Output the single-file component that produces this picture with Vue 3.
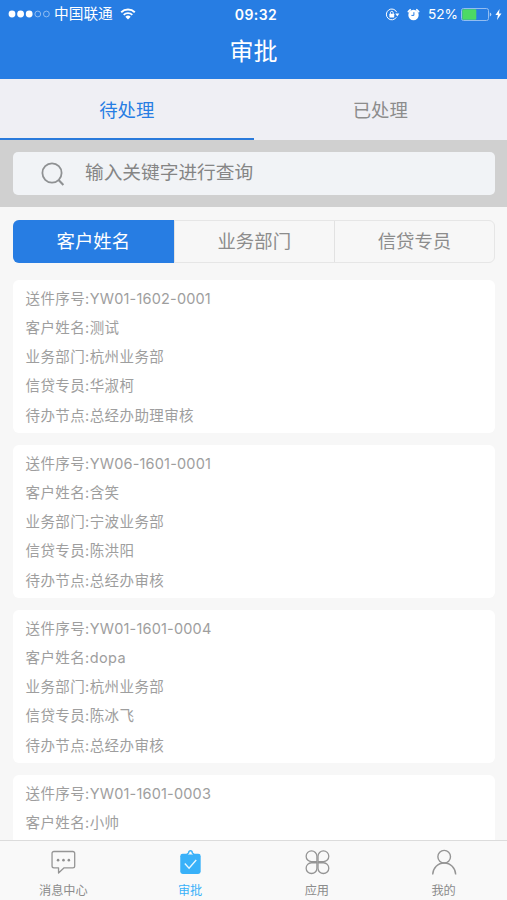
<script setup>
import { ref } from 'vue'

const tabs = ['待处理', '已处理']
const activeTab = ref(0)

const filters = ['客户姓名', '业务部门', '信贷专员']
const activeFilter = ref(0)

const keyword = ref('')

const list = ref([
    { no: 'YW01-1602-0001', name: '测试', dept: '杭州业务部', officer: '华淑柯', node: '总经办助理审核' },
    { no: 'YW06-1601-0001', name: '含笑', dept: '宁波业务部', officer: '陈洪阳', node: '总经办审核' },
    { no: 'YW01-1601-0004', name: 'dopa', dept: '杭州业务部', officer: '陈冰飞', node: '总经办审核' },
    { no: 'YW01-1601-0003', name: '小帅' }
])

const navs = [
    { key: 'message', label: '消息中心' },
    { key: 'approve', label: '审批' },
    { key: 'apps', label: '应用' },
    { key: 'mine', label: '我的' }
]
const activeNav = ref('approve')
</script>

<template>
    <div class="page">
        <!-- Header -->
        <header class="header">
            <div class="status-bar">
                <div class="status-left">
                    <svg class="signal" width="42" height="8" viewBox="0 0 42 8">
                        <circle cx="4" cy="4" r="3.4" fill="#fff" />
                        <circle cx="12.6" cy="4" r="3.4" fill="#fff" />
                        <circle cx="21.2" cy="4" r="3.4" fill="#fff" />
                        <circle cx="29.8" cy="4" r="2.9" fill="none" stroke="#a9cbf5" stroke-width=".8" />
                        <circle cx="38.4" cy="4" r="2.9" fill="none" stroke="#a9cbf5" stroke-width=".8" />
                    </svg>
                    <span class="carrier">中国联通</span>
                    <svg class="wifi" width="16" height="12" viewBox="0 0 16 12">
                        <path d="M1.2 4.3a9.8 9.8 0 0 1 13.6 0M3.7 6.9a6.2 6.2 0 0 1 8.6 0" fill="none" stroke="#fff" stroke-width="1.9" />
                        <path d="M8 11.6L5.3 8.8a3.9 3.9 0 0 1 5.4 0z" fill="#fff" />
                    </svg>
                </div>
                <span class="time">09:32</span>
                <div class="status-right">
                    <svg width="15" height="13" viewBox="0 0 15 13">
                        <path d="M11.7 4.2A5.4 5.4 0 1 0 11.4 9.2" fill="none" stroke="#fff" stroke-width="1" />
                        <path d="M10.3 5.4h4l-2 3z" fill="#fff" />
                        <rect x="4.4" y="5.8" width="4.8" height="3.6" rx=".4" fill="#fff" />
                        <path d="M5.4 6V4.8a1.4 1.4 0 0 1 2.8 0V6" fill="none" stroke="#fff" stroke-width=".9" />
                    </svg>
                    <svg class="alarm" width="13" height="13" viewBox="0 0 13 13">
                        <circle cx="6.5" cy="7" r="5.2" fill="#fff" />
                        <path d="M1.4 3.6L3.2 1.8M11.6 3.6L9.8 1.8" stroke="#fff" stroke-width="1.8" stroke-linecap="round" />
                        <path d="M6.9 4.2V7.4H4.4" fill="none" stroke="#277de3" stroke-width="1" />
                    </svg>
                    <span class="percent">52%</span>
                    <svg width="31" height="13" viewBox="0 0 31 13">
                        <rect x=".5" y=".5" width="27" height="12" rx="2" fill="none" stroke="#93bdf1" />
                        <rect x="1.3" y="1.3" width="14" height="10.4" rx=".8" fill="#4cd964" />
                        <path d="M28.8 4.4a2.2 2.2 0 0 1 0 4.2z" fill="#b9d5f7" />
                    </svg>
                    <svg class="bolt" width="7" height="11" viewBox="0 0 7 11">
                        <path d="M4.6 0L.4 6.1h2.5L2 11l4.5-6.4H4z" fill="#fff" />
                    </svg>
                </div>
            </div>
            <h1 class="title">审批</h1>
        </header>

        <!-- Tabs -->
        <div class="tabs">
            <div
                v-for="(tab, index) in tabs"
                :key="tab"
                class="tab"
                :class="{ active: activeTab === index }"
                @click="activeTab = index"
            >
                {{ tab }}
            </div>
        </div>

        <!-- Search -->
        <div class="search">
            <label class="search-box">
                <svg width="24" height="24" viewBox="0 0 24 24" fill="none" stroke="#8f9193" stroke-width="1.8">
                    <circle cx="11" cy="11" r="9.6" />
                    <path d="M17.6 18l4.8 4.9" stroke-width="2.1" />
                </svg>
                <input v-model="keyword" class="search-input" type="text" placeholder="输入关键字进行查询" />
            </label>
        </div>

        <!-- Filters -->
        <div class="filters">
            <div
                v-for="(item, index) in filters"
                :key="item"
                class="filter"
                :class="{ active: activeFilter === index }"
                @click="activeFilter = index"
            >
                {{ item }}
            </div>
        </div>

        <!-- List -->
        <main class="list">
            <div v-for="item in list" :key="item.no" class="card">
                <p>送件序号:<span class="no">{{ item.no }}</span></p>
                <p>客户姓名:{{ item.name }}</p>
                <p v-if="item.dept">业务部门:{{ item.dept }}</p>
                <p v-if="item.officer">信贷专员:{{ item.officer }}</p>
                <p v-if="item.node">待办节点:{{ item.node }}</p>
            </div>
        </main>

        <!-- Bottom nav -->
        <nav class="nav">
            <div
                v-for="nav in navs"
                :key="nav.key"
                class="nav-item"
                :class="{ active: activeNav === nav.key }"
                @click="activeNav = nav.key"
            >
                <svg v-if="nav.key === 'message'" width="28" height="28" viewBox="0 0 28 28" fill="none" stroke="#959595" stroke-width="1.4">
                    <path d="M4.2 2.7h20.4a2 2 0 0 1 2 2v13.6a2 2 0 0 1-2 2H15.2l-6 5.6v-5.6h-5a2 2 0 0 1-2-2V4.7a2 2 0 0 1 2-2z" stroke-linejoin="round" />
                    <g fill="#8f8f8f" stroke="none">
                        <circle cx="8.7" cy="12" r="1.4" />
                        <circle cx="14.5" cy="12" r="1.4" />
                        <circle cx="20.3" cy="12" r="1.4" />
                    </g>
                </svg>
                <svg v-else-if="nav.key === 'approve'" width="28" height="28" viewBox="0 0 28 28">
                    <rect x="3.5" y="5.2" width="22" height="21.6" rx="2.6" fill="#38b1f9" />
                    <path d="M10.6 6.7C10.6 4.9 12.4 4.9 12.6 3.8a1.9 1.9 0 0 1 3.8 0C16.6 4.9 18.4 4.9 18.4 6.7z" fill="#f9f9f9" stroke="#38b1f9" stroke-width="1.6" />
                    <path d="M8.4 15.7l4.6 4.9 7.7-8.8" fill="none" stroke="#e6f6ff" stroke-width="1.5" />
                </svg>
                <svg v-else-if="nav.key === 'apps'" width="28" height="28" viewBox="0 0 28 28" fill="none" stroke="#959595" stroke-width="1.4">
                    <path d="M13.9 13.6H8a5.8 5.8 0 1 1 5.9-5.8z" />
                    <path d="M15.1 13.6H21a5.8 5.8 0 1 0-5.9-5.8z" />
                    <path d="M13.9 14.8H8a5.8 5.8 0 1 0 5.9 5.8z" />
                    <path d="M15.1 14.8H21a5.8 5.8 0 1 1-5.9 5.8z" />
                </svg>
                <svg v-else width="28" height="28" viewBox="0 0 28 28" fill="none" stroke="#959595" stroke-width="1.5">
                    <circle cx="14.2" cy="8.3" r="6.8" />
                    <path d="M1.8 27.4c.4-7 5.6-12.3 12.4-12.3s12 5.3 12.4 12.3" />
                </svg>
                <span class="nav-label">{{ nav.label }}</span>
            </div>
        </nav>
    </div>
</template>

<style>
body {
    margin: 0;
    background: #f7f7f7;
}
</style>

<style scoped>
.page {
    display: flex;
    flex-direction: column;
    height: 100vh;
    overflow: hidden;
    background: #f7f7f7;
    font-family: Inter, "Noto Sans CJK SC", sans-serif;
    color: #8c8c8c;
}

.header {
    flex: none;
    height: 79px;
    background: #277de3;
    color: #fff;
}

.status-bar {
    display: grid;
    grid-template-columns: 1fr auto 1fr;
    align-items: center;
    height: 27px;
    padding: 0 5px 0 8px;
    font-size: 14px;
    line-height: 27px;
}

.status-left,
.status-right {
    display: flex;
    align-items: center;
}

.carrier {
    margin-left: 4px;
    padding-top: 1px;
    font-size: 14.7px;
}

.wifi {
    margin-left: 7px;
}

.time {
    font-size: 14px;
    font-weight: 600;
    letter-spacing: 0.4px;
    padding-left: 2px;
}

.status-right {
    justify-content: flex-end;
}

.alarm {
    margin-left: 7px;
}

.percent {
    margin: 0 3px 0 8px;
    font-size: 13.7px;
}

.bolt {
    margin-left: 3px;
}

.title {
    margin: 0;
    font-size: 24px;
    font-weight: 400;
    line-height: 50px;
    text-align: center;
}

.tabs {
    display: flex;
    flex: none;
    height: 61px;
    background: #efeff4;
}

.tab {
    flex: 1;
    box-sizing: border-box;
    border-bottom: 2px solid transparent;
    font-size: 18.4px;
    line-height: 62px;
    text-align: center;
}

.tab.active {
    border-bottom-color: #2a7adb;
    color: #277de3;
}

.search {
    flex: none;
    padding: 12px 12px 12px 13px;
    background: #d0d0d0;
}

.search-box {
    display: flex;
    align-items: center;
    height: 43px;
    padding-left: 28px;
    border-radius: 5px;
    background: #f1f3f6;
}

.search-input {
    flex: 1;
    margin-left: 20px;
    padding: 0 0 3px;
    border: none;
    outline: none;
    background: transparent;
    font-family: inherit;
    font-size: 18.7px;
    color: #858585;
}

.search-input::placeholder {
    color: #858585;
    opacity: 1;
}

.filters {
    display: flex;
    flex: none;
    height: 43px;
    margin: 13px 12px 17px 13px;
    box-sizing: border-box;
    border: 1px solid #e6e6e6;
    border-radius: 6px;
}

.filter {
    flex: 1;
    border-left: 1px solid #e2e2e2;
    font-size: 18.4px;
    line-height: 41px;
    text-align: center;
}

.filter:first-child {
    border-left: none;
}

.filter.active {
    flex: 1 0 1.5px;
    margin: -1px 0 -1px -1px;
    border-radius: 6px 0 0 6px;
    background: #277de3;
    color: #fff;
    line-height: 43px;
}

.list {
    flex: 1;
    min-height: 0;
    overflow: hidden;
    padding: 0 12px 0 13px;
}

.card {
    box-sizing: border-box;
    height: 153px;
    margin-bottom: 12px;
    padding: 3.5px 12.5px 2px;
    border-radius: 6px;
    background: #fff;
    font-size: 14.5px;
    letter-spacing: 0.4px;
    color: #9e9e9e;
}

.card p {
    margin: 0;
    line-height: 29.3px;
}

.no {
    letter-spacing: 0.18px;
}

.nav {
    display: flex;
    flex: none;
    height: 60px;
    box-sizing: border-box;
    border-top: 1px solid #dcdcdc;
    background: #f9f9f9;
}

.nav-item {
    display: flex;
    flex: 1;
    flex-direction: column;
    align-items: center;
    padding-top: 8px;
}

.nav-label {
    margin-top: 7px;
    font-size: 12.2px;
    line-height: 18px;
}

.nav-item.active {
    color: #38b1f9;
}
</style>
